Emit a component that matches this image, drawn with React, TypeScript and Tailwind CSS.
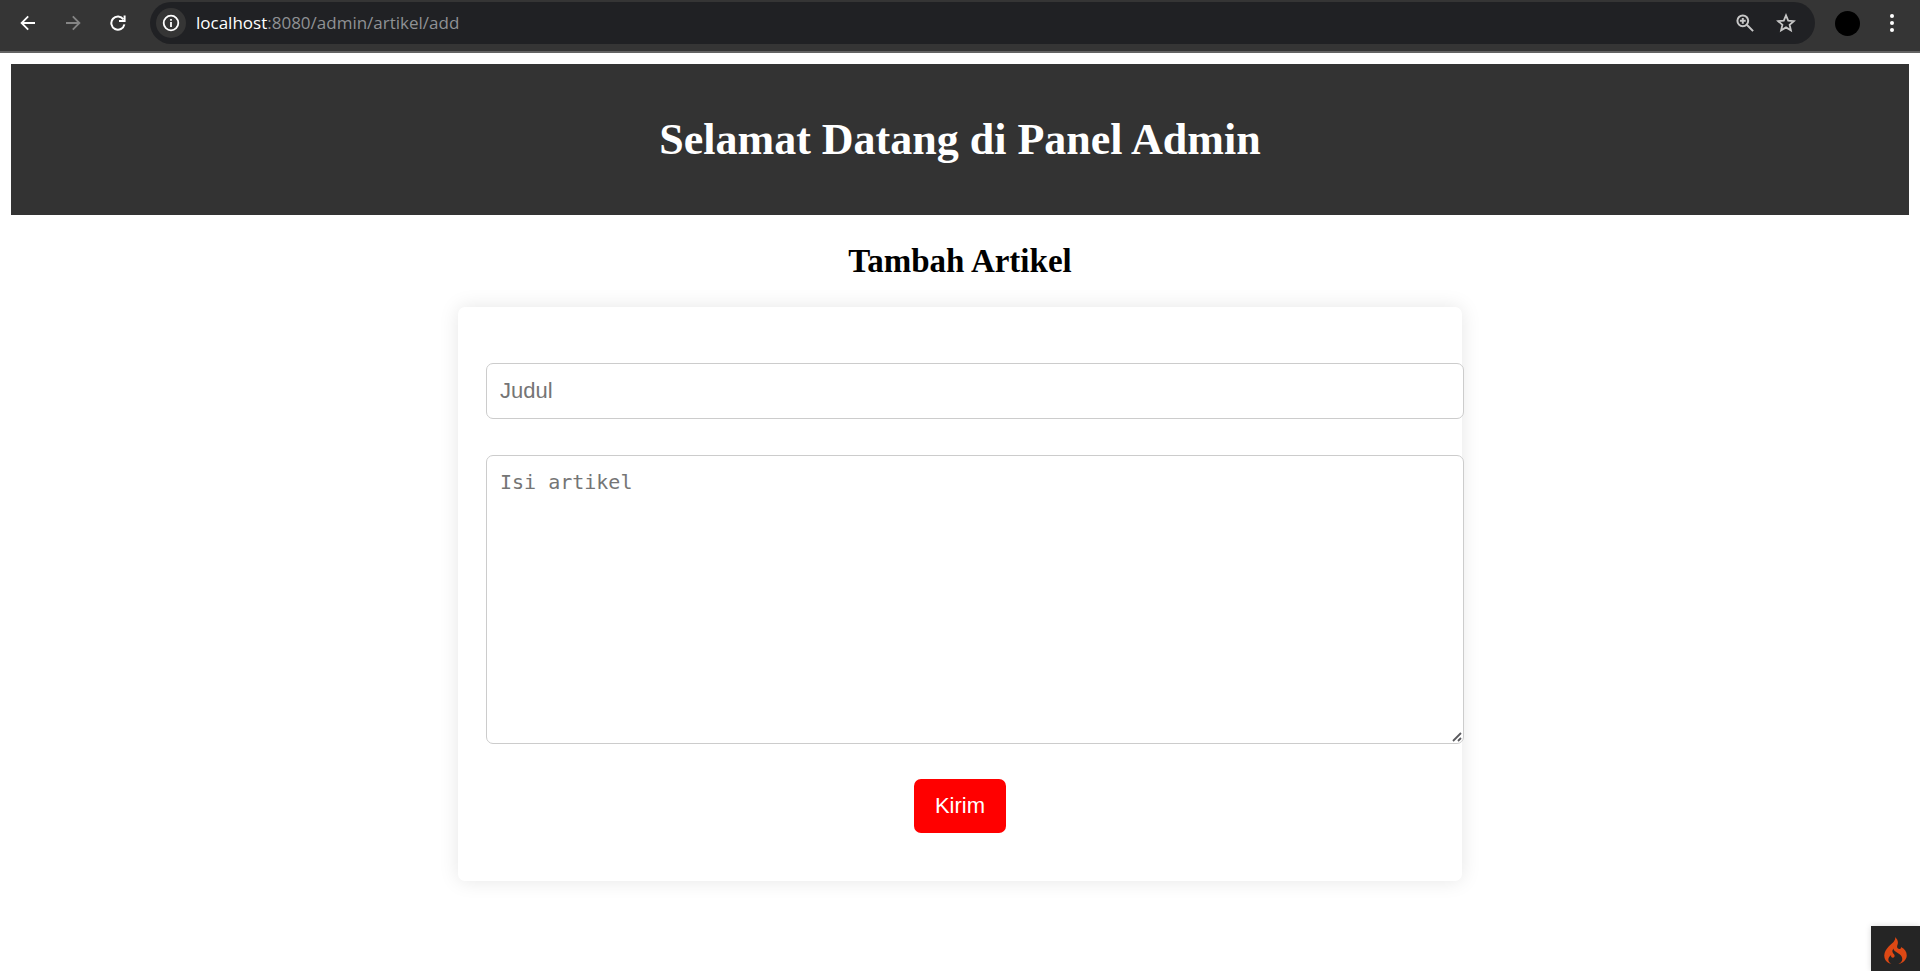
import React from "react";
import { SiCodeigniter } from "react-icons/si";

function BackIcon({ className }: { className: string }) {
  return (
    <svg viewBox="0 0 16 16" className={className} fill="none" stroke="currentColor" strokeWidth="1.8" aria-hidden="true">
      <path d="M15 8H1.800M8.200 1.400 1.600 8l6.600 6.600" />
    </svg>
  );
}

function Toolbar() {
  return (
    <div className="flex h-[53px] items-start border-b-2 border-[#636363] bg-[#353535] pt-[2px] pr-[18px] pl-5">
      <div className="flex h-[42px] items-center gap-[29px]">
        <button type="button" aria-label="Back" className="text-white">
          <BackIcon className="size-4" />
        </button>
        <button type="button" aria-label="Forward" className="text-[#858585]">
          <BackIcon className="size-4 rotate-180" />
        </button>
        <button type="button" aria-label="Reload" className="text-white">
          <svg viewBox="0 0 16 16" className="size-4" fill="none" stroke="currentColor" strokeWidth="2" aria-hidden="true">
            <path d="M13.400 4.400A6.600 6.600 0 1 0 14.400 9.400" />
            <path d="M14.600 0.400V5.900H9" />
          </svg>
        </button>
      </div>
      <div className="ml-6 flex h-[42px] flex-1 items-center rounded-full bg-[#202124] pr-[19px] pl-[6px]">
        <button
          type="button"
          aria-label="Site information"
          className="flex size-[30px] items-center justify-center rounded-full bg-[#353535] text-white"
        >
          <svg viewBox="0 0 18 18" className="size-[18px]" fill="none" stroke="currentColor" strokeWidth="1.8" aria-hidden="true">
            <circle cx="9" cy="9" r="7.300" />
            <path d="M9 8v5M9 5v1.800" />
          </svg>
        </button>
        <span className="ml-[10px] flex-1 font-['Open_Sans',sans-serif] text-[17px] leading-6 text-[#8f9194]">
          <span className="text-white">localhost</span>:8080/admin/artikel/add
        </span>
        <button type="button" aria-label="Zoom" className="text-[#c7c7c7]">
          <svg viewBox="0 0 18 18" className="size-[18px]" fill="none" stroke="currentColor" strokeWidth="2" aria-hidden="true">
            <circle cx="6.800" cy="6.800" r="5.400" />
            <path d="m10.800 10.800 6.300 6.300M6.800 3.900v5.800M3.900 6.800h5.800" />
          </svg>
        </button>
        <button type="button" aria-label="Bookmark" className="ml-[22px] text-[#c7c7c7]">
          <svg viewBox="0 0 20 20" className="size-5" fill="none" stroke="currentColor" strokeWidth="1.800" aria-hidden="true">
            <path d="m10 2.400 2.200 5.200 5.600.5-4.200 3.700 1.300 5.500-4.900-2.900-4.900 2.900 1.300-5.500L2.200 8.100l5.600-.5z" />
          </svg>
        </button>
      </div>
      <div className="flex h-[42px] items-center">
        <button type="button" aria-label="Profile" className="ml-5 size-[25px] rounded-full bg-black" />
        <button type="button" aria-label="Menu" className="ml-[22px] text-white">
          <svg viewBox="0 0 20 20" className="size-5" fill="currentColor" aria-hidden="true">
            <circle cx="10" cy="3" r="2" />
            <circle cx="10" cy="10" r="2" />
            <circle cx="10" cy="17" r="2" />
          </svg>
        </button>
      </div>
    </div>
  );
}

export default function App() {
  return (
    <div className="min-h-screen bg-white">
      <Toolbar />
      <main className="px-[11px] pt-[11px]">
        <header className="bg-[#333333] py-[50px] text-center">
          <h1 className="font-['Liberation_Serif',serif] text-[44px] leading-[51px] font-bold text-white">
            Selamat Datang di Panel Admin
          </h1>
        </header>
        <h2 className="mt-7 text-center font-['Liberation_Serif',serif] text-[33px] leading-9 font-bold text-black">
          Tambah Artikel
        </h2>
        <form
          onSubmit={(e) => e.preventDefault()}
          className="mx-auto mt-7 mb-10 flex w-full max-w-[1004px] flex-col rounded-[7px] bg-white px-7 pt-14 pb-12 shadow-[0_0_20px_rgba(0,0,0,0.1)]"
        >
          <input
            type="text"
            aria-label="Judul"
            placeholder="Judul"
            className="-mr-[30px] h-14 rounded-[7px] border border-[#cccccc] bg-white px-[13px] font-['Liberation_Sans',sans-serif] text-[22px] leading-7 placeholder:text-[#757575]"
          />
          <div className="relative -mr-[30px] mt-9 flex">
            <textarea
              aria-label="Isi artikel"
              placeholder="Isi artikel"
              className="h-[289px] w-full resize-none rounded-[7px] border border-[#cccccc] bg-white px-[13px] py-[13px] font-['DejaVu_Sans_Mono',monospace] text-[20px] leading-[26px] placeholder:text-[#757575]"
            />
            <svg
              viewBox="0 0 10 10"
              className="pointer-events-none absolute right-[2px] bottom-[2px] size-[10px] text-[#5a5a5e]"
              fill="none"
              stroke="currentColor"
              strokeWidth="1.800"
              aria-hidden="true"
            >
              <path d="M1 9 9 1M6 9l3-3" />
            </svg>
          </div>
          <button
            type="submit"
            className="mt-[35px] self-center rounded-[7px] bg-[#ff0000] px-[21px] py-[13px] font-['Liberation_Sans',sans-serif] text-[22px] leading-7 text-white"
          >
            Kirim
          </button>
        </form>
      </main>
      <button
        type="button"
        aria-label="Debug toolbar"
        className="fixed right-0 bottom-0 flex h-[45px] w-[49px] items-start justify-center bg-[#252525] pt-[11px] text-[#dd4814] shadow-[0_0_6px_rgba(0,0,0,0.15)]"
      >
        <SiCodeigniter className="size-[27px]" aria-hidden="true" />
      </button>
    </div>
  );
}
